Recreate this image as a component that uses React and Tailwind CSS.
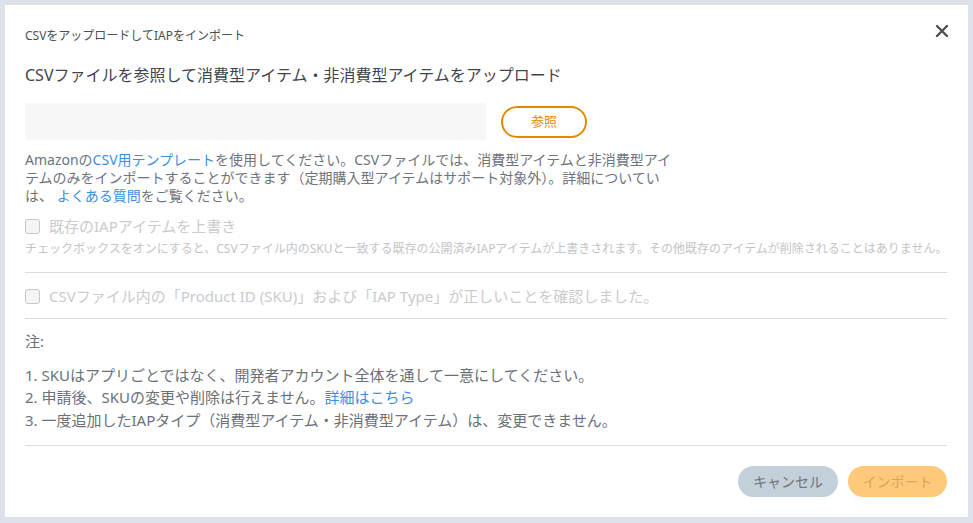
import React from "react";

const font = { fontFamily: '"Noto Sans", "Noto Sans CJK JP", sans-serif' };

const Checkbox = () => (
  <span className="inline-block w-[15px] h-[15px] rounded-[3px] border border-[#c4c7cc] bg-[#f4f5f7] shrink-0" />
);

export default function App() {
  return (
    <div className="min-h-screen bg-[#dde1ea] p-[5px] pr-[5px]" style={font}>
      <div className="bg-white h-[512px] pl-[20px] pr-[21px] pt-[23px] relative">
        {/* Close */}
        <button className="absolute top-[19px] right-[19px] text-[#4a4f57]">
          <svg width="14" height="14" viewBox="0 0 14 14">
            <path d="M2 2L12 12M12 2L2 12" stroke="currentColor" strokeWidth="2.4" strokeLinecap="round" />
          </svg>
        </button>

        <div className="text-[12px] leading-[16px] text-[#4a4f57]">CSVをアップロードしてIAPをインポート</div>

        <h2 className="mt-[19px] text-[16px] leading-[24px] text-[#3f4550]">
          CSVファイルを参照して消費型アイテム・非消費型アイテムをアップロード
        </h2>

        {/* File picker */}
        <div className="mt-[16px] flex items-center gap-[15px]">
          <div className="w-[461px] h-[37px] bg-[#f7f7f7] rounded-[2px]" />
          <button className="w-[86px] h-[32px] rounded-full border-2 border-[#e28b00] text-[#e28b00] text-[13px]">
            参照
          </button>
        </div>

        <p className="mt-[11px] text-[14px] leading-[18px] text-[#6e737c] whitespace-nowrap">
          Amazonの<span className="text-[#3a8ee6]">CSV用テンプレート</span>を使用してください。CSVファイルでは、消費型アイテムと非消費型アイ
          <br />
          テムのみをインポートすることができます（定期購入型アイテムはサポート対象外）。詳細についてい
          <br />
          は、&nbsp;<span className="text-[#3a8ee6]">よくある質問</span>をご覧ください。
        </p>

        {/* Overwrite option */}
        <label className="mt-[11px] flex items-center gap-[9px] text-[15px] leading-[20px] text-[#c9cbcf]">
          <Checkbox />
          既存のIAPアイテムを上書き
        </label>
        <div className="mt-[5px] text-[12px] leading-[16px] text-[#c2c4c8] whitespace-nowrap">
          チェックボックスをオンにすると、CSVファイル内のSKUと一致する既存の公開済みIAPアイテムが上書きされます。その他既存のアイテムが削除されることはありません。
        </div>

        <div className="mt-[15px] border-t border-[#dcdcdc]" />

        <label className="mt-[13px] flex items-center gap-[9px] text-[15px] leading-[20px] text-[#c9cbcf]">
          <Checkbox />
          CSVファイル内の「Product ID (SKU)」および「IAP Type」が正しいことを確認しました。
        </label>

        <div className="mt-[12px] border-t border-[#dcdcdc]" />

        {/* Notes */}
        <div className="mt-[11px] text-[15px] leading-[22px] text-[#6b7079]">
          <div>注:</div>
          <div className="mt-[12px]">1. SKUはアプリごとではなく、開発者アカウント全体を通して一意にしてください。</div>
          <div className="leading-[23px]">
            2. 申請後、SKUの変更や削除は行えません。<span className="text-[#3a8ee6]">詳細はこちら</span>
          </div>
          <div>3. 一度追加したIAPタイプ（消費型アイテム・非消費型アイテム）は、変更できません。</div>
        </div>

        <div className="mt-[14px] border-t border-[#dcdcdc]" />

        {/* Footer */}
        <div className="mt-[20px] flex justify-end gap-[10px]">
          <button className="w-[100px] h-[31px] rounded-full bg-[#c3d0da] text-[#6f7377] text-[14px]">
            キャンセル
          </button>
          <button className="w-[99px] h-[31px] rounded-full bg-[#ffc97a] text-[#d7a65e] text-[14px]">
            インポート
          </button>
        </div>
      </div>
    </div>
  );
}
